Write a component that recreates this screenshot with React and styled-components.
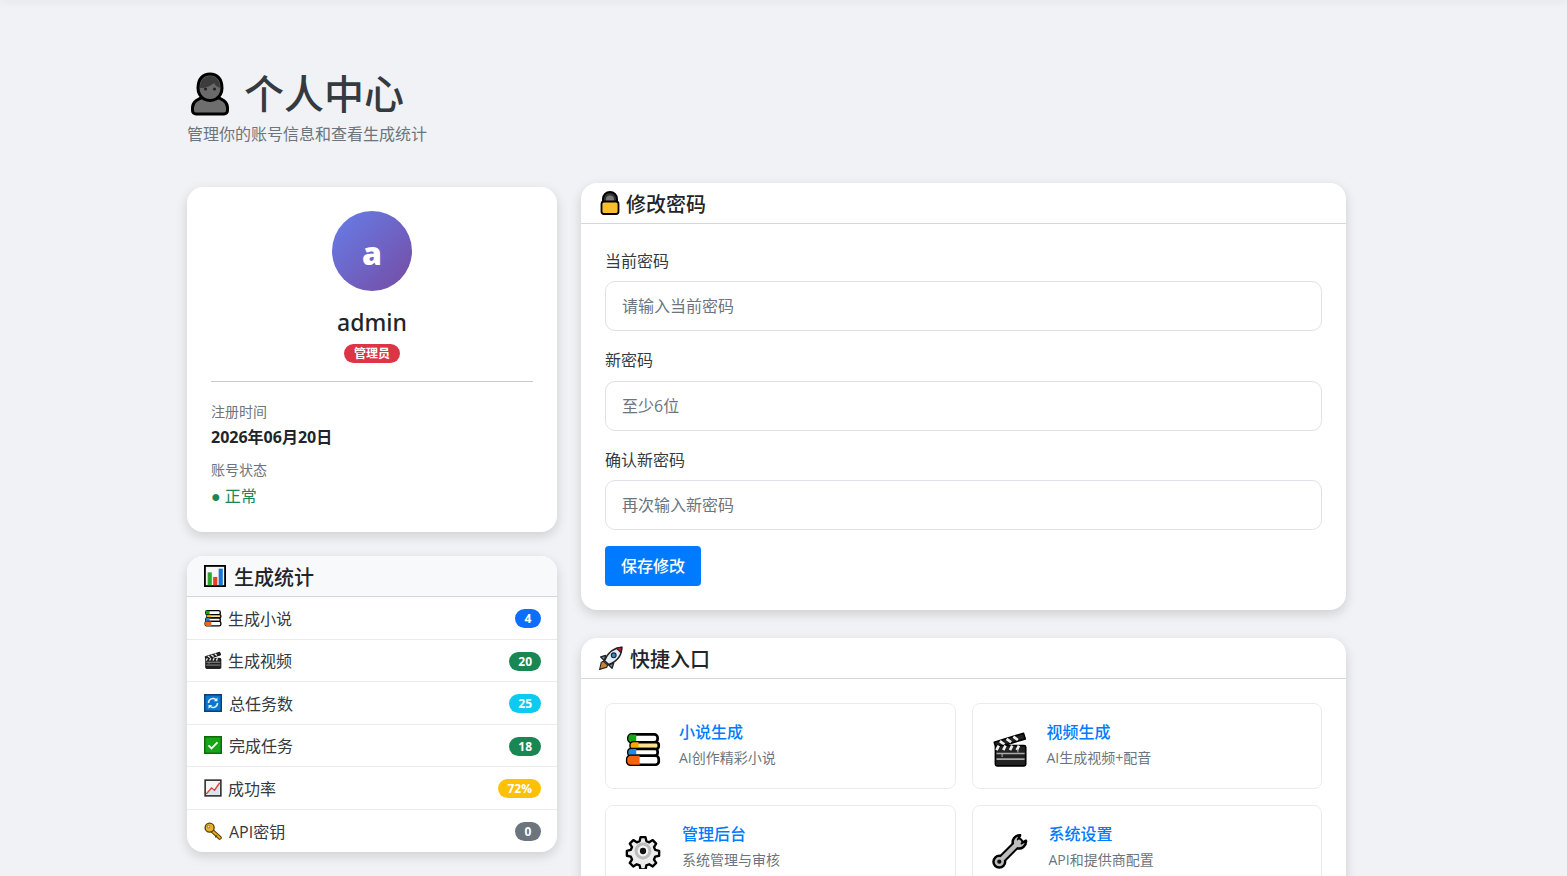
import React from 'react'
import styled, { createGlobalStyle } from 'styled-components'

const Global = createGlobalStyle`
html,body{margin:0;padding:0;background:#f0f2f5;scrollbar-width:none;}
body{font-family:"Open Sans","Noto Sans CJK SC","Noto Sans",sans-serif;color:#212529;font-size:16px;}
*{box-sizing:border-box;}
`

const Outline = '#000'

const UserIcon = () => (
  <svg width="38" height="44" viewBox="0 0 38 44">
    <path d="M5 42c-2 0-3.500-1.500-3.500-3.500v-3C1.500 30 7 26 14 25h10c7 1 12.500 5 12.500 10.500v3c0 2-1.500 3.500-3.500 3.500z" fill="#6e6e6e" stroke={Outline} strokeWidth="3" strokeLinejoin="round" />
    <path d="M13 27c-3-2-6-5-6-11C7 7 12 2 19 2s12 5 12 14c0 6-3 9-6 11-4 2-8 2-12 0z" fill="#6a6a6a" stroke={Outline} strokeWidth="3" strokeLinejoin="round" />
    <path d="M9 16C9 8 13 4 19 4s10 4 10 12c-3-1-5-3-6-5-3 3-9 5-14 5z" fill="#3c3c3c" />
    <circle cx="14.500" cy="17" r="1.500" fill="#222" />
    <circle cx="23.500" cy="17" r="1.500" fill="#222" />
  </svg>
)

const ChartIcon = ({ size }) => (
  <svg width={size} height={size} viewBox="0 0 24 24">
    <rect x="1" y="1" width="22" height="22" fill="#f7f7f7" stroke={Outline} strokeWidth="2" />
    <rect x="4" y="8" width="4.500" height="14" fill="#2fa32f" />
    <rect x="10" y="13" width="4.500" height="9" fill="#e5401f" />
    <rect x="16" y="4" width="4.500" height="18" fill="#1976d2" />
  </svg>
)

const BooksIcon = ({ size }) => (
  <svg width={size} height={size} viewBox="0 0 32 32">
    <rect x="3" y="3" width="26" height="7" rx="3" fill="#fff" stroke={Outline} strokeWidth="2.400" />
    <path d="M3 6.500a3 3 0 0 1 3-3.500h4v7H6a3 3 0 0 1-3-3.500z" fill="#16a516" />
    <rect x="5" y="10" width="25" height="6" rx="2.500" fill="#ffe08a" stroke={Outline} strokeWidth="2.400" />
    <path d="M5 13a2.600 2.600 0 0 1 2.500-3H12v6H7.500A2.600 2.600 0 0 1 5 13z" fill="#f5a800" />
    <rect x="3" y="16" width="26" height="6" rx="2.500" fill="#fff" stroke={Outline} strokeWidth="2.400" />
    <path d="M3 19a2.600 2.600 0 0 1 2.500-3H10v6H5.500A2.600 2.600 0 0 1 3 19z" fill="#2b88d8" />
    <rect x="2" y="22" width="28" height="8" rx="3" fill="#fff" stroke={Outline} strokeWidth="2.400" />
    <path d="M2 26a3.400 3.400 0 0 1 3.400-4H13v8H5.400A3.400 3.400 0 0 1 2 26z" fill="#f7630c" />
  </svg>
)

const ClapperIcon = ({ size }) => (
  <svg width={size} height={size} viewBox="0 0 32 32">
    <path d="M2 10 28 2l1.600 5L3.500 15z" fill="#222" stroke={Outline} strokeWidth="1.400" strokeLinejoin="round" />
    <path d="M7 9l4 3M13 7l4 3M19 5l4 3" stroke="#eee" strokeWidth="2.400" />
    <rect x="3" y="13" width="27" height="18" rx="1.500" fill="#222" stroke={Outline} strokeWidth="1.400" />
    <path d="M6 13l-2 4M12 13l-2 4M18 13l-2 4M24 13l-2 4" stroke="#eee" strokeWidth="2.400" />
    <path d="M4 20h25M4 25h25" stroke="#aaa" strokeWidth="1.400" />
    <path d="M9 20v3M23 16v3" stroke="#aaa" strokeWidth="1" />
  </svg>
)

const CycleIcon = ({ size }) => (
  <svg width={size} height={size} viewBox="0 0 24 24">
    <rect x="1" y="1" width="22" height="22" fill="#0b78d0" stroke="#0a3f78" strokeWidth="2" />
    <path d="M6 12a6 6 0 0 1 10-4.400M18 12a6 6 0 0 1-10 4.400" fill="none" stroke="#e6f2fb" strokeWidth="2" />
    <path d="M18 4.500v5h-5zM6 19.500v-5h5z" fill="#e6f2fb" />
  </svg>
)

const CheckIcon = ({ size }) => (
  <svg width={size} height={size} viewBox="0 0 24 24">
    <rect x="1" y="1" width="22" height="22" fill="#16a516" stroke="#0c6b0c" strokeWidth="2" />
    <path d="M6 12.500l4 4 8-8" fill="none" stroke="#eaffea" strokeWidth="2.600" />
  </svg>
)

const TrendIcon = ({ size }) => (
  <svg width={size} height={size} viewBox="0 0 24 24">
    <rect x="1.500" y="1.500" width="21" height="21" fill="#f5f5f5" stroke="#222" strokeWidth="2" />
    <path d="M3 21l7-8 4 3 7-10v15z" fill="#dbe4ee" />
    <path d="M3 20l7-8 4 3 7-10" fill="none" stroke="#d8473b" strokeWidth="1.800" />
  </svg>
)

const KeyIcon = ({ size }) => (
  <svg width={size} height={size} viewBox="0 0 24 24">
    <path d="M10 11l11 10" stroke="#5a4000" strokeWidth="5.400" strokeLinecap="round" />
    <path d="M10 11l11 10" stroke="#e0a526" strokeWidth="2.800" strokeLinecap="round" />
    <path d="M17 18l-2 2.500" stroke="#5a4000" strokeWidth="2" />
    <circle cx="7.500" cy="7.500" r="6" fill="#e9b02f" stroke="#5a4000" strokeWidth="1.800" />
    <circle cx="6" cy="6" r="1.700" fill="#fff3c4" stroke="#5a4000" strokeWidth="0.800" />
  </svg>
)

const LockIcon = ({ size }) => (
  <svg width={size} height={size} viewBox="0 0 24 24">
    <path d="M5 12V8a7 7 0 0 1 14 0v4" fill="#333" stroke={Outline} strokeWidth="2" />
    <path d="M8 12V8.500a4 4 0 0 1 8 0V12z" fill="#777" />
    <rect x="3.500" y="10.500" width="17" height="12.500" rx="2.500" fill="#f9bd30" stroke={Outline} strokeWidth="1.800" />
  </svg>
)

const RocketIcon = ({ size }) => (
  <svg width={size} height={size} viewBox="0 0 24 24">
    <path d="M5 15l-2 1-1.500 6.500L8 20.500l1-2z" fill="#c9803a" stroke="#222" strokeWidth="1" />
    <path d="M7 9.500 2.500 11 6 14.500zM14.500 17 13 21.500 9.500 18z" fill="#7b8ba0" stroke="#222" strokeWidth="1.200" strokeLinejoin="round" />
    <path d="M6 14.500C9 7 15 2.500 22 2c0 7-4.500 13-12 16z" fill="#e3edf7" stroke="#222" strokeWidth="1.400" strokeLinejoin="round" />
    <path d="M17 2.900c2-.7 3.500-.9 5-.9 0 1.600-.3 3.200-1 5z" fill="#a32035" stroke="#222" strokeWidth="1" />
    <circle cx="14.500" cy="9.500" r="2.200" fill="#2b88d8" stroke="#222" strokeWidth="1" />
  </svg>
)

const GearIcon = ({ size }) => (
  <svg width={size} height={size} viewBox="0 0 32 32">
    <path d="M13.500 2h5l.9 4 2.900 1.200 3.500-2.200 3.500 3.500-2.200 3.500 1.200 2.900 4 .9v5l-4 .9-1.200 2.900 2.200 3.500-3.500 3.500-3.500-2.200-2.900 1.200-.9 4h-5l-.9-4-2.900-1.200-3.500 2.200-3.500-3.500 2.200-3.500-1.200-2.900-4-.9v-5l4-.9 1.200-2.900-2.200-3.500 3.500-3.500 3.500 2.200 2.900-1.200z" fill="#ececec" stroke={Outline} strokeWidth="2.400" strokeLinejoin="round" transform="translate(16 16) scale(.88) translate(-16 -16)" />
    <circle cx="16" cy="16" r="7.500" fill="#bcbcbc" />
    <circle cx="16" cy="16" r="4.800" fill="#f4f4f4" />
    <circle cx="16" cy="16" r="2.800" fill="#111" />
  </svg>
)

const WrenchIcon = ({ size }) => (
  <svg width={size} height={size} viewBox="0 0 32 32">
    <path d="M7 25 24 8" stroke={Outline} strokeWidth="7.600" strokeLinecap="round" />
    <circle cx="6.500" cy="25.500" r="5.200" fill="#bdbdbd" stroke={Outline} strokeWidth="2.200" />
    <path d="M25 2a6.200 6.200 0 0 0-6.200 8.300L22 13.400a6.200 6.200 0 0 0 8.200-6.600l-4 2.200-3-3z" fill="#bdbdbd" stroke={Outline} strokeWidth="2.200" strokeLinejoin="round" />
    <path d="M7 25 24 8" stroke="#bdbdbd" strokeWidth="4" strokeLinecap="round" />
    <circle cx="6.500" cy="25.500" r="1.900" fill="#111" />
  </svg>
)

const stats = [
  { Icon: BooksIcon, label: '生成小说', value: '4', color: '#0d6efd', gap: 6 },
  { Icon: ClapperIcon, label: '生成视频', value: '20', color: '#198754', gap: 6 },
  { Icon: CycleIcon, label: '总任务数', value: '25', color: '#0dcaf0', gap: 7 },
  { Icon: CheckIcon, label: '完成任务', value: '18', color: '#198754', gap: 7 },
  { Icon: TrendIcon, label: '成功率', value: '72%', color: '#ffc107', gap: 6 },
  { Icon: KeyIcon, label: 'API密钥', value: '0', color: '#6c757d', gap: 7 },
]

const fields = [
  { label: '当前密码', placeholder: '请输入当前密码' },
  { label: '新密码', placeholder: '至少6位' },
  { label: '确认新密码', placeholder: '再次输入新密码' },
]

const links = [
  { Icon: BooksIcon, title: '小说生成', desc: 'AI创作精彩小说', gap: 18 },
  { Icon: ClapperIcon, title: '视频生成', desc: 'AI生成视频+配音', gap: 19 },
  { Icon: GearIcon, title: '管理后台', desc: '系统管理与审核', gap: 21 },
  { Icon: WrenchIcon, title: '系统设置', desc: 'API和提供商配置', gap: 21 },
]

export default function App() {
  return (
    <>
      <Global />
      <TopShade />
      <Page>
        <Heading>
          <Title><UserIcon />个人中心</Title>
          <Subtitle>管理你的账号信息和查看生成统计</Subtitle>
        </Heading>
        <Columns>
          <LeftColumn>
            <ProfileCard>
              <Avatar>a</Avatar>
              <Name>admin</Name>
              <RoleBadge>管理员</RoleBadge>
              <Divider />
              <InfoLabel>注册时间</InfoLabel>
              <InfoValue>2026年06月20日</InfoValue>
              <InfoLabel>账号状态</InfoLabel>
              <StatusValue><StatusDot>●</StatusDot> 正常</StatusValue>
            </ProfileCard>
            <Card>
              <StatsHeader><ChartIcon size={22} />生成统计</StatsHeader>
              {stats.map(({ Icon, label, value, color, gap }) => (
                <StatRow key={label}>
                  <StatLabel $gap={gap}><Icon size={18} />{label}</StatLabel>
                  <Pill $bg={color}>{value}</Pill>
                </StatRow>
              ))}
            </Card>
          </LeftColumn>
          <RightColumn>
            <Card>
              <CardHeader $gap={4}><LockIcon size={24} />修改密码</CardHeader>
              <FormBody>
                {fields.map(f => (
                  <Field key={f.label}>
                    <FieldLabel>{f.label}</FieldLabel>
                    <Input type="password" placeholder={f.placeholder} />
                  </Field>
                ))}
                <SaveButton>保存修改</SaveButton>
              </FormBody>
            </Card>
            <Card>
              <CardHeader $gap={6}><RocketIcon size={26} />快捷入口</CardHeader>
              <LinkGrid>
                {links.map(({ Icon, title, desc, gap }) => (
                  <LinkCard key={title} $gap={gap}>
                    <IconSlot><Icon size={36} /></IconSlot>
                    <LinkText>
                      <LinkTitle>{title}</LinkTitle>
                      <LinkDesc>{desc}</LinkDesc>
                    </LinkText>
                  </LinkCard>
                ))}
              </LinkGrid>
            </Card>
          </RightColumn>
        </Columns>
      </Page>
    </>
  )
}

const TopShade = styled.div`
height:0;
box-shadow:0 0 8px 1px rgba(0,0,0,.14);
`

const Page = styled.div`
width:1159px;
margin-left:187px;
padding-top:67px;
padding-bottom:24px;
`

const Heading = styled.div`
margin-bottom:37px;
`

const Title = styled.h1`
display:flex;
align-items:center;
gap:15px;
margin:0;
padding-left:4px;
font-size:40px;
font-weight:500;
line-height:54px;
color:#343a40;
`

const Subtitle = styled.p`
margin:1px 0 0;
font-size:16px;
line-height:24px;
color:#6c757d;
`

const Columns = styled.div`
display:flex;
gap:24px;
align-items:flex-start;
`

const LeftColumn = styled.div`
width:370px;
flex:none;
display:flex;
flex-direction:column;
gap:24px;
margin-top:4px;
`

const RightColumn = styled.div`
flex:1;
display:flex;
flex-direction:column;
gap:28px;
`

const Card = styled.section`
background:#fff;
border-radius:16px;
box-shadow:0 4px 12px rgba(0,0,0,.15);
overflow:hidden;
`

const ProfileCard = styled(Card)`
height:345px;
padding:24px;
display:flex;
flex-direction:column;
align-items:flex-start;
`

const Avatar = styled.div`
width:80px;
height:80px;
flex:none;
align-self:center;
padding-top:3px;
border-radius:50%;
display:flex;
align-items:center;
justify-content:center;
background:linear-gradient(135deg,#667eea,#764ba2);
color:#fff;
font-size:32px;
font-weight:800;
`

const Name = styled.h2`
align-self:center;
margin:15px 0 0;
font-family:"Noto Sans",sans-serif;
font-size:23px;
font-weight:500;
line-height:32px;
color:#212529;
`

const RoleBadge = styled.span`
align-self:center;
margin-top:6px;
height:19px;
padding:0 9.500px;
border-radius:10px;
background:#dc3545;
color:#fff;
font-size:12px;
font-weight:700;
line-height:19px;
`

const Divider = styled.hr`
width:100%;
flex:none;
margin:18px 0 19px;
border:0;
border-top:1px solid #c8cbcf;
`

const InfoLabel = styled.div`
font-size:14px;
line-height:21px;
color:#6c757d;
`

const InfoValue = styled.div`
margin:3px 0 10px;
font-size:16px;
font-weight:700;
line-height:24px;
`

const StatusValue = styled.div`
margin-top:4px;
font-size:16px;
line-height:24px;
color:#198754;
`

const StatusDot = styled.span`
font-family:"Liberation Sans",sans-serif;
`

const CardHeader = styled.h3`
display:flex;
align-items:center;
gap:${p => p.$gap}px;
margin:0;
height:41px;
padding:0 17px;
border-bottom:1px solid #d5d8db;
font-size:20px;
font-weight:500;
color:#212529;
`

const StatsHeader = styled(CardHeader)`
background:#f8f9fa;
gap:8px;
`

const StatRow = styled.div`
display:flex;
align-items:center;
justify-content:space-between;
height:42.500px;
padding:0 16px 0 17px;
border-bottom:1px solid #e9ecef;
&:last-child{border-bottom:0;}
`

const StatLabel = styled.div`
display:flex;
align-items:center;
gap:${p => p.$gap}px;
font-size:16px;
color:#343a40;
`

const Pill = styled.span`
min-width:26px;
height:19px;
margin-top:2px;
padding:0 9px;
border-radius:10px;
background:${p => p.$bg};
color:#fff;
font-size:12px;
font-weight:700;
line-height:19px;
text-align:center;
`

const FormBody = styled.div`
padding:23.750px 24px 24px;
`

const Field = styled.div`
margin-bottom:16px;
`

const FieldLabel = styled.label`
display:block;
margin-bottom:6px;
font-size:16px;
line-height:27.500px;
color:#343a40;
`

const Input = styled.input`
display:block;
width:100%;
height:50px;
padding:0 16px;
border:1px solid #dee2e6;
border-radius:10px;
background:#fff;
font:inherit;
outline:none;
&::placeholder{color:#6c757d;opacity:1;}
`

const SaveButton = styled.button`
display:block;
height:40px;
padding:0 16px 2px;
border:0;
border-radius:4px;
background:#007bff;
color:#fff;
font:inherit;
font-weight:500;
cursor:pointer;
`

const LinkGrid = styled.div`
display:grid;
grid-template-columns:1fr 1fr;
gap:16px;
padding:24px;
`

const LinkCard = styled.div`
display:flex;
align-items:center;
gap:${p => p.$gap}px;
height:86px;
padding:0 0 0 19px;
border:1px solid #e9ecef;
border-radius:8px;
background:#fff;
`

const IconSlot = styled.div`
display:flex;
margin-top:6px;
`

const LinkText = styled.div`
margin-bottom:4px;
`

const LinkTitle = styled.div`
font-size:16px;
font-weight:500;
line-height:24px;
color:#007bff;
`

const LinkDesc = styled.div`
margin-top:3px;
font-size:14px;
line-height:21px;
color:#6c757d;
`
